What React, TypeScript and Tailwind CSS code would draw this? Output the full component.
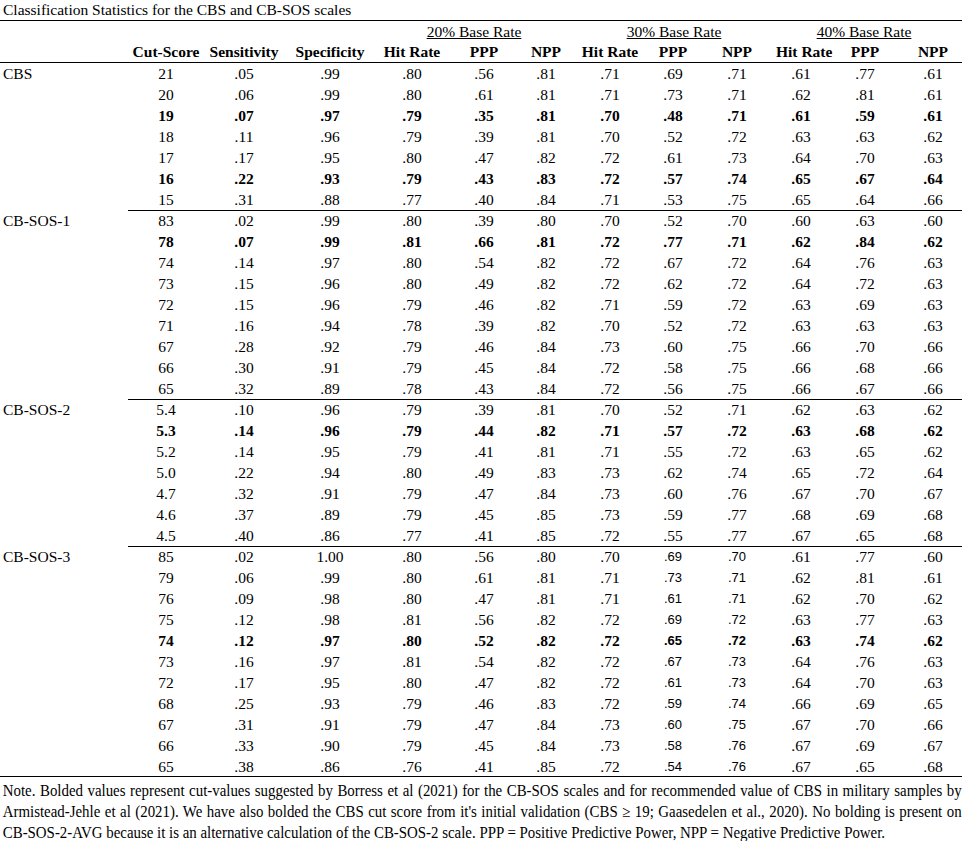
import React from "react";

type Group = {
  label: string;
  rows: string[][];
  bold: number[];
  sans?: boolean;
};

const groups: Group[] = [
  {
    label: "CBS",
    bold: [2, 5],
    rows: [
      ["21", ".05", ".99", ".80", ".56", ".81", ".71", ".69", ".71", ".61", ".77", ".61"],
      ["20", ".06", ".99", ".80", ".61", ".81", ".71", ".73", ".71", ".62", ".81", ".61"],
      ["19", ".07", ".97", ".79", ".35", ".81", ".70", ".48", ".71", ".61", ".59", ".61"],
      ["18", ".11", ".96", ".79", ".39", ".81", ".70", ".52", ".72", ".63", ".63", ".62"],
      ["17", ".17", ".95", ".80", ".47", ".82", ".72", ".61", ".73", ".64", ".70", ".63"],
      ["16", ".22", ".93", ".79", ".43", ".83", ".72", ".57", ".74", ".65", ".67", ".64"],
      ["15", ".31", ".88", ".77", ".40", ".84", ".71", ".53", ".75", ".65", ".64", ".66"],
    ],
  },
  {
    label: "CB-SOS-1",
    bold: [1],
    rows: [
      ["83", ".02", ".99", ".80", ".39", ".80", ".70", ".52", ".70", ".60", ".63", ".60"],
      ["78", ".07", ".99", ".81", ".66", ".81", ".72", ".77", ".71", ".62", ".84", ".62"],
      ["74", ".14", ".97", ".80", ".54", ".82", ".72", ".67", ".72", ".64", ".76", ".63"],
      ["73", ".15", ".96", ".80", ".49", ".82", ".72", ".62", ".72", ".64", ".72", ".63"],
      ["72", ".15", ".96", ".79", ".46", ".82", ".71", ".59", ".72", ".63", ".69", ".63"],
      ["71", ".16", ".94", ".78", ".39", ".82", ".70", ".52", ".72", ".63", ".63", ".63"],
      ["67", ".28", ".92", ".79", ".46", ".84", ".73", ".60", ".75", ".66", ".70", ".66"],
      ["66", ".30", ".91", ".79", ".45", ".84", ".72", ".58", ".75", ".66", ".68", ".66"],
      ["65", ".32", ".89", ".78", ".43", ".84", ".72", ".56", ".75", ".66", ".67", ".66"],
    ],
  },
  {
    label: "CB-SOS-2",
    bold: [1],
    rows: [
      ["5.4", ".10", ".96", ".79", ".39", ".81", ".70", ".52", ".71", ".62", ".63", ".62"],
      ["5.3", ".14", ".96", ".79", ".44", ".82", ".71", ".57", ".72", ".63", ".68", ".62"],
      ["5.2", ".14", ".95", ".79", ".41", ".81", ".71", ".55", ".72", ".63", ".65", ".62"],
      ["5.0", ".22", ".94", ".80", ".49", ".83", ".73", ".62", ".74", ".65", ".72", ".64"],
      ["4.7", ".32", ".91", ".79", ".47", ".84", ".73", ".60", ".76", ".67", ".70", ".67"],
      ["4.6", ".37", ".89", ".79", ".45", ".85", ".73", ".59", ".77", ".68", ".69", ".68"],
      ["4.5", ".40", ".86", ".77", ".41", ".85", ".72", ".55", ".77", ".67", ".65", ".68"],
    ],
  },
  {
    label: "CB-SOS-3",
    bold: [4],
    sans: true,
    rows: [
      ["85", ".02", "1.00", ".80", ".56", ".80", ".70", ".69", ".70", ".61", ".77", ".60"],
      ["79", ".06", ".99", ".80", ".61", ".81", ".71", ".73", ".71", ".62", ".81", ".61"],
      ["76", ".09", ".98", ".80", ".47", ".81", ".71", ".61", ".71", ".62", ".70", ".62"],
      ["75", ".12", ".98", ".81", ".56", ".82", ".72", ".69", ".72", ".63", ".77", ".63"],
      ["74", ".12", ".97", ".80", ".52", ".82", ".72", ".65", ".72", ".63", ".74", ".62"],
      ["73", ".16", ".97", ".81", ".54", ".82", ".72", ".67", ".73", ".64", ".76", ".63"],
      ["72", ".17", ".95", ".80", ".47", ".82", ".72", ".61", ".73", ".64", ".70", ".63"],
      ["68", ".25", ".93", ".79", ".46", ".83", ".72", ".59", ".74", ".66", ".69", ".65"],
      ["67", ".31", ".91", ".79", ".47", ".84", ".73", ".60", ".75", ".67", ".70", ".66"],
      ["66", ".33", ".90", ".79", ".45", ".84", ".73", ".58", ".76", ".67", ".69", ".67"],
      ["65", ".38", ".86", ".76", ".41", ".85", ".72", ".54", ".76", ".67", ".65", ".68"],
    ],
  },
];

const headers = [
  "Cut-Score", "Sensitivity", "Specificity",
  "Hit Rate", "PPP", "NPP",
  "Hit Rate", "PPP", "NPP",
  "Hit Rate", "PPP", "NPP",
];

// column widths match the source table
const cols =
  "grid grid-cols-[128px_76px_80px_92px_72px_72px_52px_76px_50px_78px_50px_78px_58px]";

const StatRow = ({
  label,
  values,
  bold,
  last,
  sans,
}: {
  label: string;
  values: string[];
  bold: boolean;
  last: boolean;
  sans: boolean;
}) => (
  <div className={cols + " h-[21px] leading-[21px]"}>
    <div className="pl-[3px] whitespace-nowrap">{label}</div>
    {values.map((v, i) => {
      const isSans = sans && (i === 7 || i === 8);
      return (
        <div
          key={i}
          className={
            "text-center" +
            (last ? " border-b border-black" : "") +
            (bold ? " font-bold" : "") +
            (isSans ? " font-['Liberation_Sans',Arial,sans-serif] text-[13px]" : "")
          }
        >
          {v}
        </div>
      );
    })}
  </div>
);

export default function App() {
  return (
    <div className="min-h-screen bg-white text-black font-['Liberation_Serif','Times_New_Roman',serif] text-[15.5px]">
      <div className="w-[962px]">
        <div className="h-[21px] leading-[20px] pl-[3px] border-b border-black">
          Classification Statistics for the CBS and CB-SOS scales
        </div>

        <div className={cols + " h-[21px] leading-[21px]"}>
          <div className="col-span-4" />
          <div className="col-span-3 text-center">
            <span className="underline">20% Base Rate</span>
          </div>
          <div className="col-span-3 text-center">
            <span className="underline">30% Base Rate</span>
          </div>
          <div className="col-span-3 text-center pr-[10px]">
            <span className="underline">40% Base Rate</span>
          </div>
        </div>

        <div className={cols + " h-[21px] leading-[20px] border-b border-black font-bold"}>
          <div />
          {headers.map((h, i) => (
            <div key={i} className="text-center whitespace-nowrap">
              {h}
            </div>
          ))}
        </div>

        {groups.map((g) =>
          g.rows.map((r, ri) => (
            <StatRow
              key={g.label + ri}
              label={ri === 0 ? g.label : ""}
              values={r}
              bold={g.bold.includes(ri)}
              last={ri === g.rows.length - 1 && g.label !== "CB-SOS-3"}
              sans={!!g.sans}
            />
          ))
        )}

        <div className="border-t border-black w-[962px] -mt-px" />

        <div className="w-[962px] overflow-hidden pt-[3px] leading-[21px] text-[16px]">
          <div className="w-[1034px] pl-[3px] origin-left scale-x-[0.93] text-justify [text-align-last:justify]">
            Note. Bolded values represent cut-values suggested by Borress et al (2021) for the CB-SOS scales and for recommended value of CBS in military samples by
          </div>
          <div className="w-[1034px] pl-[3px] origin-left scale-x-[0.93] text-justify [text-align-last:justify]">
            Armistead-Jehle et al (2021). We have also bolded the CBS cut score from it&apos;s initial validation (CBS ≥ 19; Gaasedelen et al., 2020). No bolding is present on
          </div>
          <div className="w-[1034px] pl-[3px] origin-left scale-x-[0.93] whitespace-nowrap">
            CB-SOS-2-AVG because it is an alternative calculation of the CB-SOS-2 scale. PPP = Positive Predictive Power, NPP = Negative Predictive Power.
          </div>
        </div>
      </div>
    </div>
  );
}
